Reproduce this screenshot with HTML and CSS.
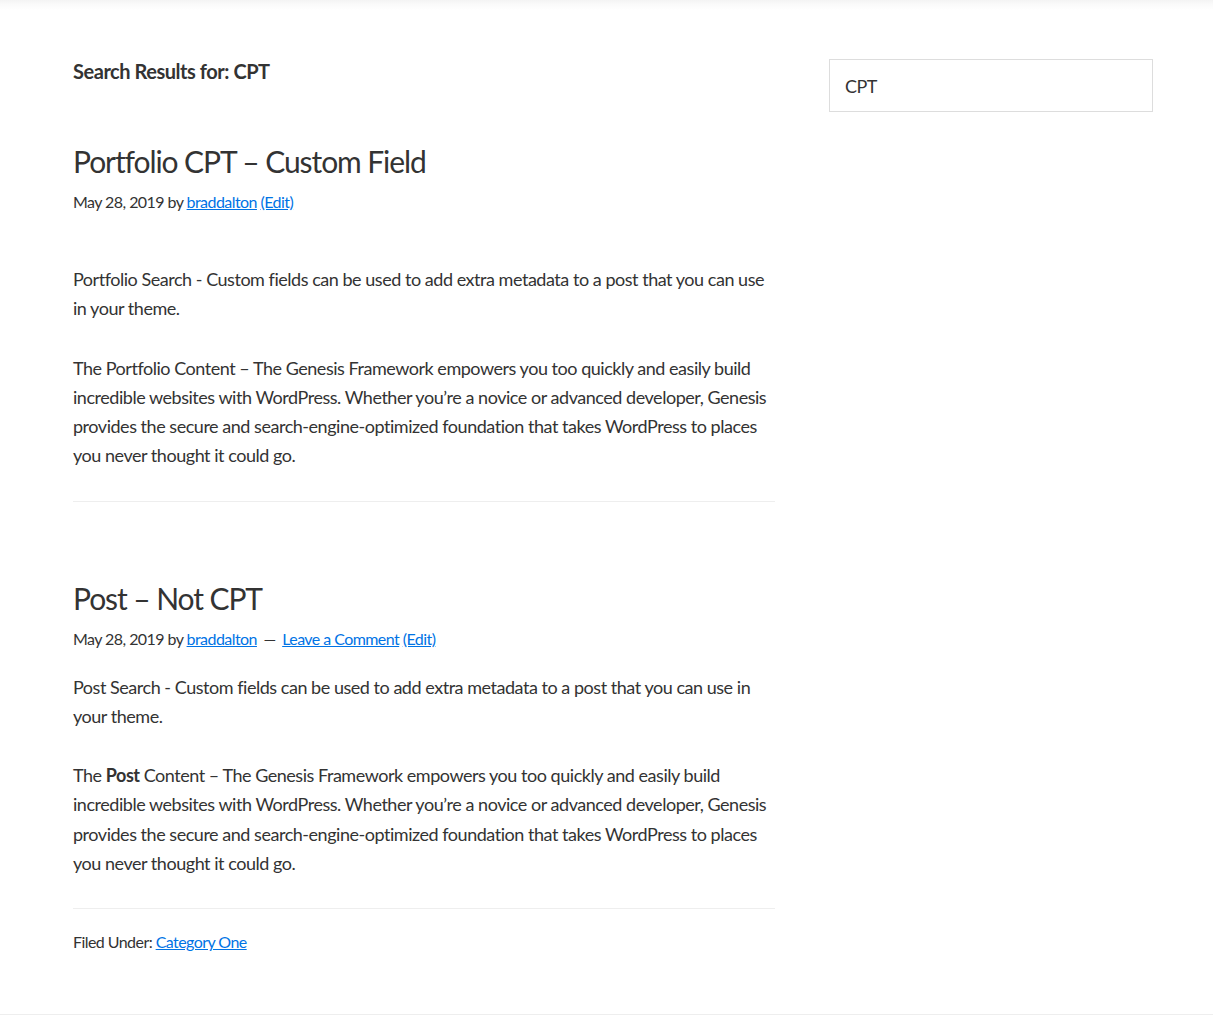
FILE: index.html
```html
<!DOCTYPE html>
<html lang="en">
<head>
<meta charset="utf-8">
<title>Search Results for: CPT</title>
<link rel="stylesheet" href="styles.css">
</head>
<body>
<header class="site-header"></header>
<div class="site-inner">
  <main class="content">
    <h1 class="archive-title">Search Results for: CPT</h1>

    <article class="entry entry-first">
      <h2 class="entry-title">Portfolio CPT – Custom Field</h2>
      <p class="entry-meta">May 28, 2019 by <a href="#">braddalton</a> <a href="#">(Edit)</a></p>
      <div class="entry-content">
        <p>Portfolio Search - Custom fields can be used to add extra metadata to a post that you can use in your theme.</p>
        <p>The Portfolio Content – The Genesis Framework empowers you too quickly and easily build incredible websites with WordPress. Whether you’re a novice or advanced developer, Genesis provides the secure and search-engine-optimized foundation that takes WordPress to places you never thought it could go.</p>
      </div>
    </article>

    <article class="entry entry-second">
      <h2 class="entry-title">Post – Not CPT</h2>
      <p class="entry-meta">May 28, 2019 by <a href="#">braddalton</a> <span class="sep">—</span> <a href="#">Leave a Comment</a> <a href="#">(Edit)</a></p>
      <div class="entry-content">
        <p>Post Search - Custom fields can be used to add extra metadata to a post that you can use in your theme.</p>
        <p>The <strong>Post</strong> Content – The Genesis Framework empowers you too quickly and easily build incredible websites with WordPress. Whether you’re a novice or advanced developer, Genesis provides the secure and search-engine-optimized foundation that takes WordPress to places you never thought it could go.</p>
      </div>
      <footer class="entry-footer">
        <p class="entry-meta">Filed Under: <a href="#">Category One</a></p>
      </footer>
    </article>
  </main>
  <aside class="sidebar">
    <form class="search-form">
      <input class="search-input" type="search" value="CPT">
    </form>
  </aside>
</div>
<footer class="site-footer"></footer>
</body>
</html>
```

FILE: styles.css
```css
* { box-sizing: border-box; }
html, body { margin: 0; padding: 0; background: #fff; }
body {
  font-family: Lato, "Source Sans Pro", "Noto Sans", sans-serif;
  color: #333;
  font-size: 18px;
  line-height: 29.25px;
  letter-spacing: -0.026em;
}
a { color: #0073e5; text-decoration: underline; }

.site-header {
  height: 10px;
  background: linear-gradient(to bottom, #f4f4f4 0%, #fafafa 40%, #ffffff 100%);
}

.site-inner {
  width: 1080px;
  margin-left: 73px;
  padding-top: 49px;
  display: flex;
  justify-content: space-between;
  align-items: flex-start;
}
.content { width: 702px; }
.sidebar { width: 324px; }

.archive-title {
  margin: 0;
  font-size: 20px;
  line-height: 24px;
  font-weight: 700;
  letter-spacing: -0.023em;
}

.entry-title {
  margin: 0;
  font-size: 30px;
  font-weight: 400;
  line-height: 36px;
  letter-spacing: -0.036em;
}
.entry-meta {
  margin: 0;
  font-size: 16px;
  line-height: 26px;
  letter-spacing: -0.035em;
}
.entry-meta .sep { margin: 0 3px; color: #333; }

.entry-content p { margin: 0 0 30px; }
.entry-content p:last-child { margin-bottom: 0; }

.entry-first { padding-top: 60px; }
.entry-first .entry-title + .entry-meta { margin-top: 10px; }
.entry-first .entry-content { padding-top: 50px; }
.entry-first .entry-content { padding-bottom: 30px; border-bottom: 1px solid #eee; }

.entry-second { padding-top: 78px; }
.entry-second .entry-title + .entry-meta { margin-top: 10px; }
.entry-second .entry-content { padding-top: 21px; padding-bottom: 30px; }

.entry-footer {
  border-top: 1px solid #eee;
  padding-top: 20px;
}

.search-input {
  display: block;
  width: 324px;
  height: 53px;
  border: 1px solid #ddd;
  padding: 0 15px;
  font-family: Lato, "Source Sans Pro", sans-serif;
  font-size: 18px;
  letter-spacing: -0.03em;
  color: #333;
  background: #fff;
  outline: none;
  -webkit-appearance: none;
  appearance: none;
  border-radius: 0;
}

.site-footer {
  margin-top: 59px;
  border-top: 1px solid #eee;
  height: 5px;
}
```
